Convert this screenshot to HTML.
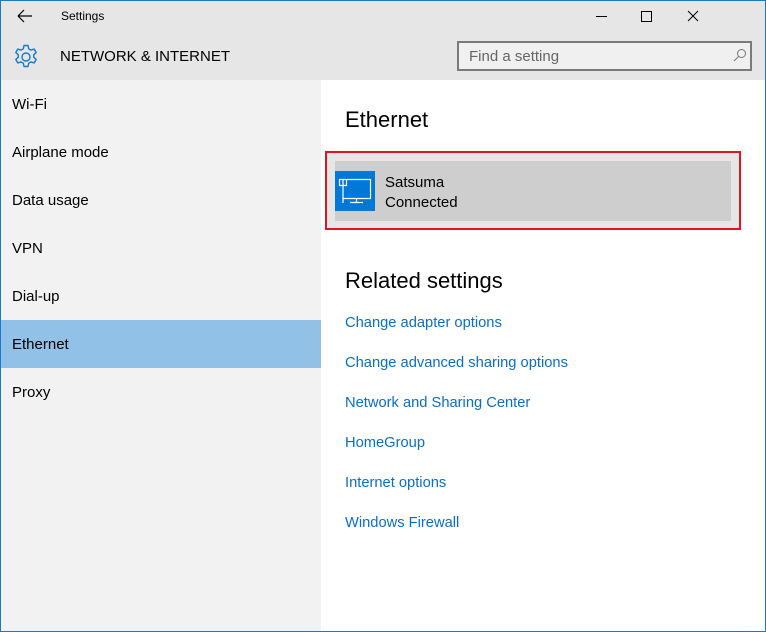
<!DOCTYPE html>
<html><head><style>
*{margin:0;padding:0;box-sizing:border-box}
body{width:766px;height:632px;overflow:hidden;font-family:"Liberation Sans",sans-serif;background:#fff;position:relative}
.frame{position:absolute;inset:0;border:1px solid #1979ca}
.hdr{position:absolute;left:1px;top:1px;width:764px;height:79px;background:#e6e6e6}
.side{position:absolute;left:1px;top:80px;width:320px;height:551px;background:#f2f2f2}
.t{position:absolute;white-space:nowrap}
.item{position:absolute;left:0;width:320px;height:48px;font-size:15px;color:#000;padding-left:11px;line-height:50px}
.link{position:absolute;left:345px;font-size:14.7px;color:#0a6fc2}
</style></head><body>
<div class="hdr"></div>
<div class="side">
<div class="item" style="top:0">Wi-Fi</div>
<div class="item" style="top:48px">Airplane mode</div>
<div class="item" style="top:96px">Data usage</div>
<div class="item" style="top:144px">VPN</div>
<div class="item" style="top:192px">Dial-up</div>
<div class="item" style="top:240px;background:#91c1e7">Ethernet</div>
<div class="item" style="top:288px">Proxy</div>
</div>
<svg class="t" style="left:17px;top:9px" width="16" height="14"><path d="M1 7H15M1 7L7 1M1 7L7 13" stroke="#000" stroke-width="1.2" fill="none"/></svg>
<div class="t" style="left:61px;top:9px;font-size:12px;color:#000">Settings</div>
<svg class="t" style="left:592px;top:9px" width="160" height="14"><path d="M4 7.5H15" stroke="#000"/><rect x="49.5" y="2.5" width="10" height="10" stroke="#000" fill="none"/><path d="M96 2L106 12M106 2L96 12" stroke="#000" fill="none"/></svg>
<svg class="t" style="left:13px;top:44px" width="26" height="26" viewBox="0 0 26 26"><path d="M11 1.5h4l.7 3.3 2.3 1.3 3.2-1 2 3.4-2.5 2.3v2.4l2.5 2.3-2 3.4-3.2-1-2.3 1.3-.7 3.3h-4l-.7-3.3-2.3-1.3-3.2 1-2-3.4 2.5-2.3v-2.4L2.8 8.5l2-3.4 3.2 1 2.3-1.3z" fill="none" stroke="#1979ca" stroke-width="1.4" stroke-linejoin="round"/><circle cx="13" cy="13" r="4" fill="none" stroke="#1979ca" stroke-width="1.4"/></svg>
<div class="t" style="left:60px;top:48px;font-size:15px;color:#000">NETWORK &amp; INTERNET</div>
<div class="t" style="left:457px;top:41px;width:295px;height:30px;border:2px solid #7a7a7a;background:#f0f0f0"></div>
<div class="t" style="left:469px;top:48px;font-size:15px;color:#666">Find a setting</div>
<svg class="t" style="left:733px;top:48px" width="14" height="14"><circle cx="8.5" cy="5.5" r="4" stroke="#777" fill="none"/><path d="M5.5 8.5L1 13" stroke="#777"/></svg>
<div class="t" style="left:345px;top:107px;font-size:22px;color:#000">Ethernet</div>
<div class="t" style="left:325px;top:151px;width:416px;height:79px;border:2px solid #e81123"></div>
<div class="t" style="left:327px;top:153px;width:412px;height:75px;background:#e6e6e6"></div>
<div class="t" style="left:335px;top:161px;width:396px;height:60px;background:#cecece"></div>
<div class="t" style="left:335px;top:171px;width:40px;height:40px;background:#0078d7"></div>
<svg class="t" style="left:335px;top:171px" width="40" height="40"><path d="M4.5 8.5h7v6h-7zM8 8.5v23.5M11.5 8.5h24v19h-27M21.5 27.5v4M15 31.5h13M8 11v2" stroke="#fff" stroke-width="1.2" fill="none"/></svg>
<div class="t" style="left:385px;top:174px;font-size:15px;color:#000">Satsuma</div>
<div class="t" style="left:385px;top:194px;font-size:15px;color:#000">Connected</div>
<div class="t" style="left:345px;top:268px;font-size:22px;color:#000">Related settings</div>
<div class="link t" style="top:315px">Change adapter options</div>
<div class="link t" style="top:355px">Change advanced sharing options</div>
<div class="link t" style="top:395px">Network and Sharing Center</div>
<div class="link t" style="top:435px">HomeGroup</div>
<div class="link t" style="top:475px">Internet options</div>
<div class="link t" style="top:515px">Windows Firewall</div>
<div class="frame"></div>
</body></html>
